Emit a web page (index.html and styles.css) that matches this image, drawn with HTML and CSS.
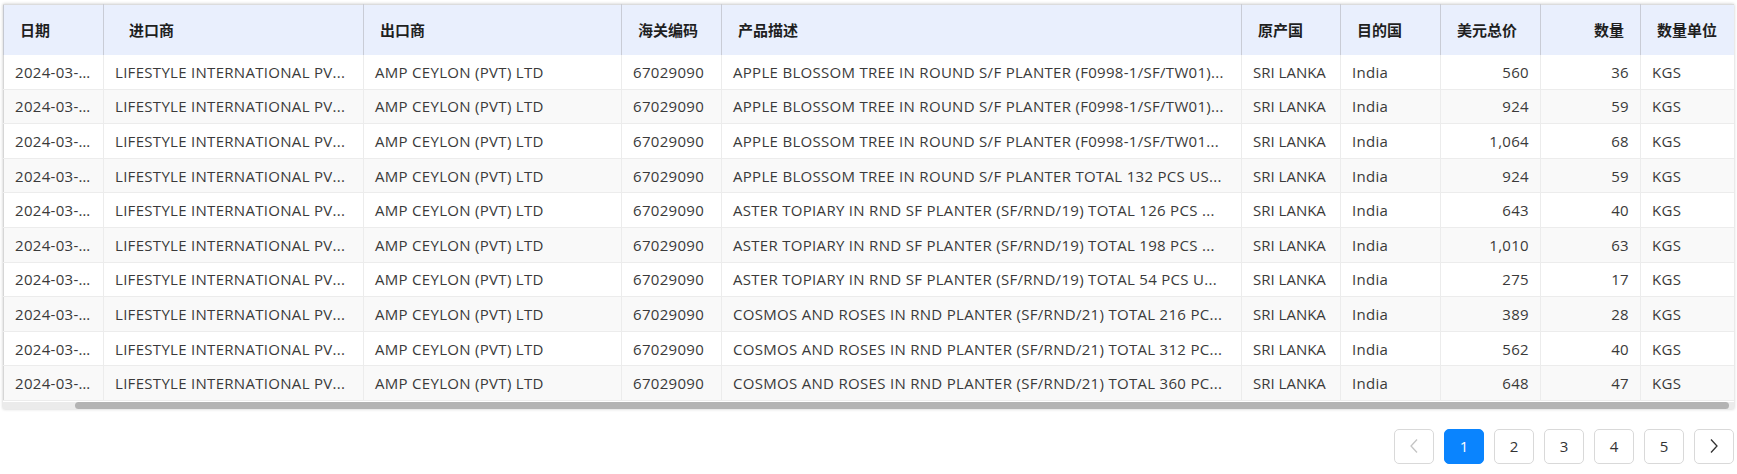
FILE: index.html
```html
<!DOCTYPE html>
<html lang="zh">
<head>
<meta charset="utf-8">
<link rel="stylesheet" href="styles.css">
</head>
<body>
<div class="page">
  <div class="table-box">
    <div class="table-clip">
      <table class="grid">
        <colgroup>
          <col class="c-date"><col class="c-imp"><col class="c-exp"><col class="c-hs"><col class="c-desc"><col class="c-orig"><col class="c-dest"><col class="c-usd"><col class="c-qty"><col class="c-unit">
        </colgroup>
        <thead>
          <tr>
            <th>日期</th>
            <th class="th-imp">进口商</th>
            <th>出口商</th>
            <th>海关编码</th>
            <th>产品描述</th>
            <th>原产国</th>
            <th>目的国</th>
            <th class="num th-usd">美元总价</th>
            <th class="num">数量</th>
            <th>数量单位</th>
          </tr>
        </thead>
        <tbody>
          <tr><td>2024-03-...</td><td>LIFESTYLE INTERNATIONAL PV...</td><td>AMP CEYLON (PVT) LTD</td><td>67029090</td><td>APPLE BLOSSOM TREE IN ROUND S/F PLANTER (F0998-1/SF/TW01)...</td><td class="orig">SRI LANKA</td><td>India</td><td class="num">560</td><td class="num">36</td><td>KGS</td></tr>
          <tr><td>2024-03-...</td><td>LIFESTYLE INTERNATIONAL PV...</td><td>AMP CEYLON (PVT) LTD</td><td>67029090</td><td>APPLE BLOSSOM TREE IN ROUND S/F PLANTER (F0998-1/SF/TW01)...</td><td class="orig">SRI LANKA</td><td>India</td><td class="num">924</td><td class="num">59</td><td>KGS</td></tr>
          <tr><td>2024-03-...</td><td>LIFESTYLE INTERNATIONAL PV...</td><td>AMP CEYLON (PVT) LTD</td><td>67029090</td><td>APPLE BLOSSOM TREE IN ROUND S/F PLANTER (F0998-1/SF/TW01...</td><td class="orig">SRI LANKA</td><td>India</td><td class="num">1,064</td><td class="num">68</td><td>KGS</td></tr>
          <tr><td>2024-03-...</td><td>LIFESTYLE INTERNATIONAL PV...</td><td>AMP CEYLON (PVT) LTD</td><td>67029090</td><td>APPLE BLOSSOM TREE IN ROUND S/F PLANTER TOTAL 132 PCS US...</td><td class="orig">SRI LANKA</td><td>India</td><td class="num">924</td><td class="num">59</td><td>KGS</td></tr>
          <tr><td>2024-03-...</td><td>LIFESTYLE INTERNATIONAL PV...</td><td>AMP CEYLON (PVT) LTD</td><td>67029090</td><td>ASTER TOPIARY IN RND SF PLANTER (SF/RND/19) TOTAL 126 PCS ...</td><td class="orig">SRI LANKA</td><td>India</td><td class="num">643</td><td class="num">40</td><td>KGS</td></tr>
          <tr><td>2024-03-...</td><td>LIFESTYLE INTERNATIONAL PV...</td><td>AMP CEYLON (PVT) LTD</td><td>67029090</td><td>ASTER TOPIARY IN RND SF PLANTER (SF/RND/19) TOTAL 198 PCS ...</td><td class="orig">SRI LANKA</td><td>India</td><td class="num">1,010</td><td class="num">63</td><td>KGS</td></tr>
          <tr><td>2024-03-...</td><td>LIFESTYLE INTERNATIONAL PV...</td><td>AMP CEYLON (PVT) LTD</td><td>67029090</td><td>ASTER TOPIARY IN RND SF PLANTER (SF/RND/19) TOTAL 54 PCS U...</td><td class="orig">SRI LANKA</td><td>India</td><td class="num">275</td><td class="num">17</td><td>KGS</td></tr>
          <tr><td>2024-03-...</td><td>LIFESTYLE INTERNATIONAL PV...</td><td>AMP CEYLON (PVT) LTD</td><td>67029090</td><td>COSMOS AND ROSES IN RND PLANTER (SF/RND/21) TOTAL 216 PC...</td><td class="orig">SRI LANKA</td><td>India</td><td class="num">389</td><td class="num">28</td><td>KGS</td></tr>
          <tr><td>2024-03-...</td><td>LIFESTYLE INTERNATIONAL PV...</td><td>AMP CEYLON (PVT) LTD</td><td>67029090</td><td>COSMOS AND ROSES IN RND PLANTER (SF/RND/21) TOTAL 312 PC...</td><td class="orig">SRI LANKA</td><td>India</td><td class="num">562</td><td class="num">40</td><td>KGS</td></tr>
          <tr><td>2024-03-...</td><td>LIFESTYLE INTERNATIONAL PV...</td><td>AMP CEYLON (PVT) LTD</td><td>67029090</td><td>COSMOS AND ROSES IN RND PLANTER (SF/RND/21) TOTAL 360 PC...</td><td class="orig">SRI LANKA</td><td>India</td><td class="num">648</td><td class="num">47</td><td>KGS</td></tr>
        </tbody>
      </table>
    </div>
    <div class="hscroll"><div class="hscroll-gap"></div><div class="hscroll-thumb"></div></div>
  </div>

  <nav class="pager">
    <button class="pg pg-disabled" aria-label="上一页">
      <svg width="10" height="16" viewBox="0 0 10 16"><polyline points="8,1.5 2,8 8,14.5" fill="none" stroke="#c4c4c4" stroke-width="1.3"/></svg>
    </button>
    <button class="pg pg-active">1</button>
    <button class="pg">2</button>
    <button class="pg">3</button>
    <button class="pg">4</button>
    <button class="pg">5</button>
    <button class="pg" aria-label="下一页">
      <svg width="10" height="16" viewBox="0 0 10 16"><polyline points="2,1.5 8,8 2,14.5" fill="none" stroke="#333" stroke-width="1.3"/></svg>
    </button>
  </nav>
</div>
</body>
</html>
```

FILE: styles.css
```css
html, body {
  margin: 0;
  padding: 0;
  background: #ffffff;
}

body {
  font-family: "Open Sans", "Noto Sans CJK SC", sans-serif;
  font-size: 15px;
  color: #3a3a3a;
}

.page {
  padding: 4px 3px 0 3px;
}

.table-box {
  box-shadow: 0 0 3px rgba(0, 0, 0, 0.22);
  background: #ffffff;
}

.table-clip {
  overflow: hidden;
}

.grid {
  border-collapse: collapse;
  table-layout: fixed;
  width: 1737px;
}

.c-date { width: 100px; }
.c-imp { width: 260px; }
.c-exp { width: 258px; }
.c-hs { width: 100px; }
.c-desc { width: 520px; }
.c-orig { width: 99px; }
.c-dest { width: 100px; }
.c-usd { width: 100px; }
.c-qty { width: 100px; }
.c-unit { width: 100px; }

.grid th {
  height: 50px;
  box-sizing: border-box;
  background: #e9effd;
  color: #1f1f1f;
  font-weight: 600;
  font-size: 15px;
  text-align: left;
  padding: 0 16px;
  border-right: 1px solid #c9ccd6;
  border-top: 1px solid #dcdcdc;
  white-space: nowrap;
}

.grid th:first-child {
  border-left: 1px solid #c5c8d0;
}

.grid th.th-imp {
  padding-left: 25px;
}

.grid th.num {
  text-align: right;
}

.grid th.th-usd {
  padding-right: 24px;
}

.grid td {
  height: 34.6px;
  box-sizing: border-box;
  padding: 0 12px 0 11px;
  border-right: 1px solid #ececec;
  border-bottom: 1px solid #ececec;
  white-space: nowrap;
  overflow: hidden;
  text-overflow: ellipsis;
  color: #3a3a3a;
  letter-spacing: 0.3px;
}

.grid td.orig {
  letter-spacing: 0;
  padding-right: 2px;
  text-overflow: clip;
}

.grid td:first-child {
  padding-left: 11px;
  border-left: 1px solid #d6d6d6;
}

.grid td.num {
  text-align: right;
  padding-right: 11px;
}

.grid tbody tr:nth-child(even) td {
  background: #f9f9f9;
}

.hscroll {
  display: flex;
  height: 7px;
  background: #ebebeb;
  margin-top: 1px;
}

.hscroll-gap {
  width: 72px;
  flex: none;
}

.hscroll-thumb {
  flex: 1;
  margin-right: 5px;
  background: #b3b3b3;
  border-radius: 4px;
}

.pager {
  display: flex;
  justify-content: flex-end;
  gap: 10px;
  margin-top: 20px;
}

.pg {
  width: 40px;
  height: 35px;
  box-sizing: border-box;
  border: 1px solid #d9d9d9;
  border-radius: 5px;
  background: #ffffff;
  color: #333333;
  font-family: "Open Sans", sans-serif;
  font-size: 15px;
  display: flex;
  align-items: center;
  justify-content: center;
  padding: 0;
}

.pg-active {
  background: #0a84fe;
  border-color: #0a84fe;
  color: #ffffff;
}
```
